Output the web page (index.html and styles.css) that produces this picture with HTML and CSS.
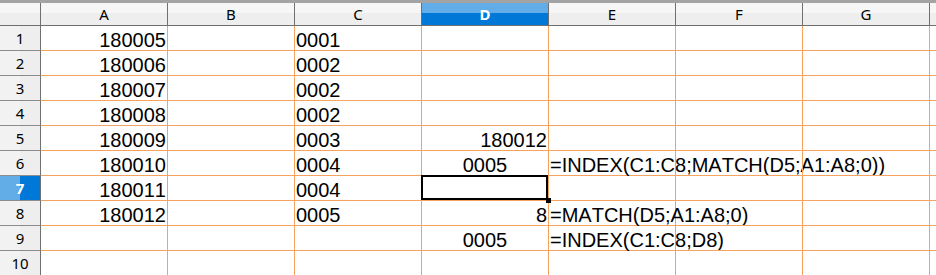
FILE: index.html
```html
<!DOCTYPE html>
<html>
<head>
<meta charset="utf-8">
<link rel="stylesheet" href="styles.css">
</head>
<body>
<div class="sheet">
  <div class="corner"></div>
  <div class="ch">A</div><div class="ch">B</div><div class="ch">C</div><div class="ch sel">D</div><div class="ch">E</div><div class="ch">F</div><div class="ch">G</div><div class="ch fill"></div>

  <div class="rh">1</div><div class="c r">180005</div><div class="c"></div><div class="c">0001</div><div class="c"></div><div class="c"></div><div class="c"></div><div class="c"></div><div class="c fill"></div>
  <div class="rh">2</div><div class="c r">180006</div><div class="c"></div><div class="c">0002</div><div class="c"></div><div class="c"></div><div class="c"></div><div class="c"></div><div class="c fill"></div>
  <div class="rh">3</div><div class="c r">180007</div><div class="c"></div><div class="c">0002</div><div class="c"></div><div class="c"></div><div class="c"></div><div class="c"></div><div class="c fill"></div>
  <div class="rh">4</div><div class="c r">180008</div><div class="c"></div><div class="c">0002</div><div class="c"></div><div class="c"></div><div class="c"></div><div class="c"></div><div class="c fill"></div>
  <div class="rh">5</div><div class="c r">180009</div><div class="c"></div><div class="c">0003</div><div class="c r">180012</div><div class="c"></div><div class="c"></div><div class="c"></div><div class="c fill"></div>
  <div class="rh">6</div><div class="c r">180010</div><div class="c"></div><div class="c">0004</div><div class="c m">0005</div><div class="c">=INDEX(C1:C8;MATCH(D5;A1:A8;0))</div><div class="c"></div><div class="c"></div><div class="c fill"></div>
  <div class="rh sel">7</div><div class="c r">180011</div><div class="c"></div><div class="c">0004</div><div class="c cursor"></div><div class="c"></div><div class="c"></div><div class="c"></div><div class="c fill"></div>
  <div class="rh">8</div><div class="c r">180012</div><div class="c"></div><div class="c">0005</div><div class="c r">8</div><div class="c">=MATCH(D5;A1:A8;0)</div><div class="c"></div><div class="c"></div><div class="c fill"></div>
  <div class="rh">9</div><div class="c r"></div><div class="c"></div><div class="c"></div><div class="c m">0005</div><div class="c">=INDEX(C1:C8;D8)</div><div class="c"></div><div class="c"></div><div class="c fill"></div>
  <div class="rh">10</div><div class="c"></div><div class="c"></div><div class="c"></div><div class="c"></div><div class="c"></div><div class="c"></div><div class="c"></div><div class="c fill"></div>
</div>
</body>
</html>
```

FILE: styles.css
```css
html, body {
  margin: 0;
  padding: 0;
  background: #ffffff;
}

.sheet {
  display: grid;
  grid-template-columns: 41px repeat(7, 127px) 1fr;
  grid-template-rows: 23px repeat(10, 25px);
  border-top: 3px solid #a3a3a3;
  width: 936px;
  height: 272px;
  overflow: hidden;
  background: #ffffff;
}

.corner, .ch, .rh {
  box-sizing: border-box;
  border-right: 1px solid #6f6f6f;
  border-bottom: 1px solid #6f6f6f;
  font-family: "Noto Sans", "Open Sans", sans-serif;
  font-size: 15px;
  color: #000;
  text-align: center;
}

.corner {
  background: linear-gradient(to bottom, #f6f6f6 0 45%, #eeeeee 45% 100%);
}

.ch {
  line-height: 22px;
  background: linear-gradient(to bottom, #f6f6f6 0 45%, #eeeeee 45% 100%);
}

.ch.fill {
  border-right: none;
}

.ch.sel {
  background: linear-gradient(to bottom, #62ade8 0 45%, #0078d7 45% 100%);
  color: #ffffff;
  font-weight: bold;
}

.rh {
  line-height: 24px;
  border-bottom-color: #8c8c8c;
  background: linear-gradient(to right, #f2f2f2 0 50%, #eeeeee 50% 100%);
}

.rh.sel {
  background: linear-gradient(to right, #62ade8 0 50%, #0078d7 50% 100%);
  color: #ffffff;
  font-weight: bold;
}

.c {
  box-sizing: border-box;
  border-right: 1px solid #f6a35f;
  border-bottom: 1px solid #f6a35f;
  font-family: "Liberation Sans", Arial, sans-serif;
  font-size: 20px;
  font-kerning: none;
  line-height: 22px;
  padding: 3px 1px 0 1px;
  white-space: nowrap;
  color: #000;
  text-align: left;
}

.c.fill {
  border-right: none;
}

.c.r {
  text-align: right;
}

.c.m {
  text-align: center;
}

.cursor {
  position: relative;
}

.cursor::after {
  content: "";
  position: absolute;
  top: -1px;
  left: -1px;
  right: 0;
  bottom: 0;
  border: 2px solid #000;
  z-index: 1;
}

.cursor::before {
  content: "";
  position: absolute;
  right: -3px;
  bottom: -3px;
  width: 5px;
  height: 5px;
  background: #000;
  z-index: 2;
}
```
